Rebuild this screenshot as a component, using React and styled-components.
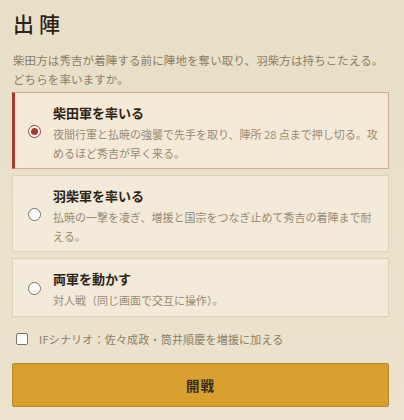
import React, { useState } from 'react';
import styled, { createGlobalStyle } from 'styled-components';

const GlobalStyle = createGlobalStyle`
  html, body {
    margin: 0;
    padding: 0;
    background: #ebe2cc;
  }
  body {
    font-family: "Noto Sans CJK JP", "Noto Sans", sans-serif;
    color: #3a2e20;
  }
`;

const Page = styled.div`
  padding: 10px 15px 10px 12px;
  background: linear-gradient(180deg, #e8dfc8 0%, #ece3ce 100%);
  min-height: 400px;
`;

const Title = styled.h1`
  margin: 0 0 0 1px;
  font-size: 21px;
  font-weight: 500;
  letter-spacing: 5px;
  line-height: 27px;
  color: #2c2418;
`;

const Lead = styled.p`
  margin: 14px 0 3px 1px;
  font-size: 11.5px;
  letter-spacing: 0.1px;
  line-height: 19px;
  color: #8b7d66;
`;

const Options = styled.div`
  display: flex;
  flex-direction: column;
  gap: 6px;
`;

const Card = styled.label`
  display: flex;
  align-items: center;
  gap: 12px;
  padding: 8px 6px 6px ${p => (p.$active ? '13px' : '15px')};
  background: ${p => (p.$active ? '#f5ead8' : '#f3eada')};
  border: 1px solid ${p => (p.$active ? '#cfa99a' : '#ddd2b8')};
  border-left: ${p => (p.$active ? '3px solid #a8382c' : '1px solid #ddd2b8')};
  cursor: pointer;
`;

const Radio = styled.span`
  flex: none;
  width: 11px;
  height: 11px;
  border-radius: 50%;
  border: 1px solid ${p => (p.$on ? '#a8382c' : '#77726a')};
  background: #fff;
  display: flex;
  align-items: center;
  justify-content: center;
  &::after {
    content: '';
    width: 7px;
    height: 7px;
    border-radius: 50%;
    background: ${p => (p.$on ? '#a8382c' : 'transparent')};
  }
`;

const CardBody = styled.div`
  display: flex;
  flex-direction: column;
`;

const CardTitle = styled.div`
  font-size: 13px;
  font-weight: 700;
  line-height: 24px;
  color: #2c2418;
`;

const CardText = styled.div`
  font-size: 11px;
  line-height: 18.5px;
  color: #978b74;
`;

const CheckRow = styled.label`
  display: flex;
  align-items: center;
  gap: 11px;
  margin: 14px 0 0 4px;
  font-size: 11px;
  letter-spacing: 0.2px;
  line-height: 16px;
  color: #8b7d66;
  cursor: pointer;
`;

const Box = styled.span`
  width: 10px;
  height: 10px;
  border: 1px solid #77726a;
  border-radius: 2px;
  background: #fff;
`;

const StartButton = styled.button`
  display: block;
  width: 100%;
  height: 44px;
  margin-top: 16px;
  background: #d9a030;
  border: 1px solid #b8862a;
  border-radius: 2px;
  font-family: "Noto Sans CJK JP", sans-serif;
  font-size: 13.5px;
  font-weight: 700;
  letter-spacing: 1px;
  color: #3a2a12;
  cursor: pointer;
`;

const options = [
  {
    id: 'shibata',
    title: '柴田軍を率いる',
    text: '夜間行軍と払暁の強襲で先手を取り、陣所 28 点まで押し切る。攻めるほど秀吉が早く来る。',
  },
  {
    id: 'hashiba',
    title: '羽柴軍を率いる',
    text: '払暁の一撃を凌ぎ、増援と国宗をつなぎ止めて秀吉の着陣まで耐える。',
  },
  {
    id: 'both',
    title: '両軍を動かす',
    text: '対人戦（同じ画面で交互に操作）。',
  },
];

export default function App() {
  const [side, setSide] = useState('shibata');

  return (
    <>
      <GlobalStyle />
      <Page>
        <Title>出陣</Title>
        <Lead>
          柴田方は秀吉が着陣する前に陣地を奪い取り、羽柴方は持ちこたえる。どちらを率いますか。
        </Lead>
        <Options>
          {options.map(o => (
            <Card key={o.id} $active={side === o.id} onClick={() => setSide(o.id)}>
              <Radio $on={side === o.id} />
              <CardBody>
                <CardTitle>{o.title}</CardTitle>
                <CardText>{o.text}</CardText>
              </CardBody>
            </Card>
          ))}
        </Options>
        <CheckRow>
          <Box />
          IFシナリオ：佐々成政・筒井順慶を増援に加える
        </CheckRow>
        <StartButton>開戦</StartButton>
      </Page>
    </>
  );
}
